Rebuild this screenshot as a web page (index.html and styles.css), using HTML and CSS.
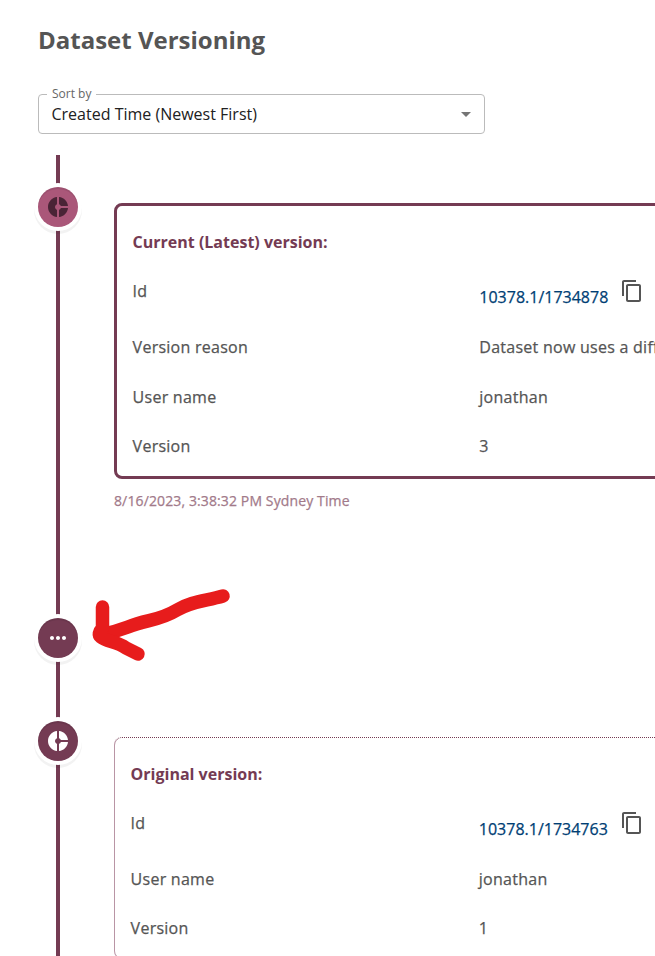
FILE: index.html
```html
<!DOCTYPE html>
<html lang="en">
<head>
<meta charset="utf-8">
<title>Dataset Versioning</title>
<link rel="stylesheet" href="styles.css">
</head>
<body>
<main class="page">
  <h1 class="heading">Dataset Versioning</h1>
  <fieldset class="select">
    <legend class="select-label">Sort by</legend>
    <div class="select-value">
      <span class="select-text">Created Time (Newest First)</span>
      <svg class="caret" viewBox="0 0 24 24"><path d="M7 10l5 5 5-5z"/></svg>
    </div>
  </fieldset>

  <section class="timeline">
    <article class="item item-current">
      <div class="rail"><div class="node node-current">
        <svg class="node-icon" viewBox="0 0 24 24"><path d="M11 9.16V2c-5 .5-9 4.79-9 10s4 9.5 9 10v-7.16c-1-.41-2-1.52-2-2.84s1-2.43 2-2.84zM14.86 11H22c-.48-4.75-4-8.53-9-9v7.16c1 .3 1.52.98 1.86 1.84zM13 14.84V22c5-.47 8.52-4.25 9-9h-7.14c-.34.86-.86 1.54-1.86 1.84z"/></svg>
      </div></div>
      <div class="content">
        <div class="card card-current">
          <h2 class="card-title">Current (Latest) version:</h2>
          <dl class="rows">
            <div class="row row-id"><dt>Id</dt><dd class="id"><a class="handle">10378.1/1734878</a><svg class="copy" viewBox="0 0 24 24"><path d="M16 1H4c-1.1 0-2 .9-2 2v14h2V3h12V1zm3 4H8c-1.1 0-2 .9-2 2v14c0 1.1.9 2 2 2h11c1.1 0 2-.9 2-2V7c0-1.1-.9-2-2-2zm0 16H8V7h11v14z"/></svg></dd></div>
            <div class="row"><dt>Version reason</dt><dd>Dataset now uses a different format</dd></div>
            <div class="row"><dt>User name</dt><dd>jonathan</dd></div>
            <div class="row"><dt>Version</dt><dd>3</dd></div>
          </dl>
        </div>
        <time class="date">8/16/2023, 3:38:32 PM Sydney Time</time>
      </div>
    </article>

    <article class="item item-more">
      <div class="rail"><div class="node">
        <svg class="node-icon" viewBox="0 0 24 24"><path d="M6 10c-1.1 0-2 .9-2 2s.9 2 2 2 2-.9 2-2-.9-2-2-2zm12 0c-1.1 0-2 .9-2 2s.9 2 2 2 2-.9 2-2-.9-2-2-2zm-6 0c-1.1 0-2 .9-2 2s.9 2 2 2 2-.9 2-2-.9-2-2-2z"/></svg>
      </div></div>
    </article>

    <article class="item item-original">
      <div class="rail"><div class="node">
        <svg class="node-icon" viewBox="0 0 24 24"><path d="M11 9.16V2c-5 .5-9 4.79-9 10s4 9.5 9 10v-7.16c-1-.41-2-1.52-2-2.84s1-2.43 2-2.84zM14.86 11H22c-.48-4.75-4-8.53-9-9v7.16c1 .3 1.52.98 1.86 1.84zM13 14.84V22c5-.47 8.52-4.25 9-9h-7.14c-.34.86-.86 1.54-1.86 1.84z"/></svg>
      </div></div>
      <div class="content">
        <div class="card card-original">
          <h2 class="card-title">Original version:</h2>
          <dl class="rows">
            <div class="row row-id"><dt>Id</dt><dd class="id"><a class="handle">10378.1/1734763</a><svg class="copy" viewBox="0 0 24 24"><path d="M16 1H4c-1.1 0-2 .9-2 2v14h2V3h12V1zm3 4H8c-1.1 0-2 .9-2 2v14c0 1.1.9 2 2 2h11c1.1 0 2-.9 2-2V7c0-1.1-.9-2-2-2zm0 16H8V7h11v14z"/></svg></dd></div>
            <div class="row"><dt>User name</dt><dd>jonathan</dd></div>
            <div class="row"><dt>Version</dt><dd>1</dd></div>
          </dl>
        </div>
      </div>
    </article>
  </section>

  <svg class="arrow" viewBox="0 0 150 90">
    <path d="M133 16C116 21 102 21 87 30C69 41 58 39 38 47Q25 52 10 55"/>
    <path d="M12.5 27V48Q7 54 11 57C17 62 26 61 36 68L48 74"/>
  </svg>
</main>
</body>
</html>
```

FILE: styles.css
```css
* {
  box-sizing: border-box;
}

body {
  margin: 0;
  height: 956px;
  overflow: hidden;
  background: #fff;
  color: #555;
  font-family: "Open Sans", sans-serif;
  font-size: 16px;
  line-height: 24px;
}

.page {
  position: relative;
  height: 956px;
  overflow: hidden;
  padding: 24px 0 0 38px;
}

.heading {
  margin: 0 0 31px;
  font-size: 24px;
  line-height: 32px;
  font-weight: 700;
}

.select {
  width: 447px;
  height: 47px;
  margin: 0 0 21px;
  padding: 0 0 0 8px;
  border: 1px solid #bbb;
  border-radius: 4px;
}

.select-label {
  padding: 0 4.5px 0 5px;
  font-size: 12px;
  line-height: 14px;
  color: #666;
}

.select-value {
  display: flex;
  align-items: center;
  justify-content: space-between;
  height: 26px;
  padding: 0 6px 0 4.5px;
  color: #212121;
}

.caret {
  width: 24px;
  height: 24px;
  fill: #757575;
}

.item {
  display: flex;
  gap: 36px;
}

.item-current {
  height: 431px;
}

.item-more {
  height: 103px;
}

.item-original {
  height: 300px;
}

.rail {
  flex: 0 0 40px;
  padding-top: 32px;
  background: linear-gradient(#743b53, #743b53) center / 4px 100% no-repeat;
}

.node {
  display: flex;
  align-items: center;
  justify-content: center;
  width: 40px;
  height: 40px;
  border-radius: 50%;
  background: #743b53;
  box-shadow: 0 0 0 4px #fff, inset 0 2px 0 rgba(0, 0, 0, .08), 0 3px 0 4px rgba(0, 0, 0, .05);
}

.node-icon {
  width: 24px;
  height: 24px;
  fill: #fff;
}

.node-current {
  background: #aa5779;
}

.node-current .node-icon {
  fill: #4a2436;
}

.content {
  flex: 0 0 730px;
  padding-top: 48px;
}

.card {
  border-radius: 8px;
}

.card-current {
  height: 276px;
  padding: 12px 15px 0 15.6px;
  border: 3px solid #743b53;
}

.card-original {
  height: 222px;
  padding: 12px 16px 0 15.6px;
  border: 1px solid #b995a5;
  border-top: 1px dotted #743b53;
}

.card-title {
  height: 49px;
  margin: 0;
  padding-top: 12px;
  color: #743b53;
  font-size: 16px;
  line-height: 24px;
  font-weight: 700;
}

.rows {
  margin: 0;
}

.row {
  display: grid;
  grid-template-columns: 1fr 1fr;
  height: 49.5px;
  padding-top: 12px;
  letter-spacing: .26px;
  -webkit-text-stroke: .25px;
}

.row-id {
  height: 56px;
}

.card-original .row:not(.row-id) {
  height: 49px;
}

dd {
  margin: 0;
  white-space: nowrap;
}

.id {
  display: flex;
  gap: 12px;
  letter-spacing: 0;
}

.handle {
  padding-top: 6px;
  color: #003e74;
}

.copy {
  width: 24px;
  height: 24px;
  fill: #555;
  -webkit-text-stroke: 0;
}

.date {
  display: block;
  margin-top: 10px;
  color: #a27a8a;
  font-size: 14px;
  letter-spacing: .12px;
  -webkit-text-stroke: .25px;
}

.arrow {
  position: absolute;
  left: 90px;
  top: 580px;
  width: 150px;
  height: 90px;
  fill: none;
  stroke: #e71c1c;
  stroke-width: 13.5px;
  stroke-linecap: round;
  stroke-linejoin: round;
}
```
